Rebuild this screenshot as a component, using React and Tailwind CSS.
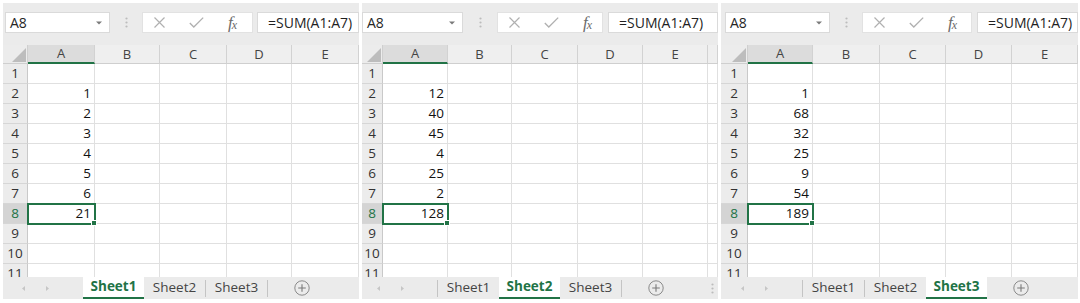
import React from 'react';

const panels = [
  {
    wrap: 'w-[356px]',
    nameBox: 'ml-[2px] w-[105px]',
    dotsArea: 'w-[32px]',
    btnBox: 'w-[111px]',
    formulaGap: 'ml-[4px]',
    rowHdr: 'w-[25px]',
    cols: ['w-[67px]', 'w-[65px]', 'w-[67px]', 'w-[65px]', 'flex-1'],
    letters: ['A', 'B', 'C', 'D', 'E'],
    arrows: 'w-[80px] pl-[19px]',
    active: 0,
    values: ['', '1', '2', '3', '4', '5', '6', '21'],
    scrollDots: false,
  },
  {
    wrap: 'w-[356px]',
    nameBox: 'ml-0 w-[101px]',
    dotsArea: 'w-[34px]',
    btnBox: 'w-[106px]',
    formulaGap: 'ml-[5px]',
    rowHdr: 'w-[21px]',
    cols: ['w-[65px]', 'w-[64px]', 'w-[66px]', 'w-[65px]', 'w-[65px]', 'flex-1'],
    letters: ['A', 'B', 'C', 'D', 'E', ''],
    arrows: 'w-[75px] pl-[15px]',
    active: 1,
    values: ['', '12', '40', '45', '4', '25', '2', '128'],
    scrollDots: true,
  },
  {
    wrap: 'w-[357px]',
    nameBox: 'ml-[4px] w-[105px]',
    dotsArea: 'w-[32px]',
    btnBox: 'w-[110px]',
    formulaGap: 'ml-[5px]',
    rowHdr: 'w-[27px]',
    cols: ['w-[65px]', 'w-[67px]', 'w-[66px]', 'w-[66px]', 'flex-1'],
    letters: ['A', 'B', 'C', 'D', 'E'],
    arrows: 'w-[81px] pl-[20px]',
    active: 2,
    values: ['', '1', '68', '32', '25', '9', '54', '189'],
    scrollDots: false,
  },
];

function VDots() {
  return (
    <svg width="3" height="11" viewBox="0 0 3 11">
      <circle cx="1.5" cy="1.5" r="1.1" fill="#bcbcbc" />
      <circle cx="1.5" cy="5.5" r="1.1" fill="#bcbcbc" />
      <circle cx="1.5" cy="9.5" r="1.1" fill="#bcbcbc" />
    </svg>
  );
}

function Toolbar({ p }) {
  return (
    <div className="h-[42px] shrink-0 flex items-start pt-[9px] font-['Open_Sans',sans-serif]">
      <div className={`${p.nameBox} h-[21px] bg-white border border-[#dadada] flex items-center justify-between pl-[4px] pr-[7px]`}>
        <span className="text-[14px] text-[#262626] leading-none">A8</span>
        <svg width="6" height="4" viewBox="0 0 6 4">
          <path d="M0 0.5H6L3 3.5Z" fill="#7a7a7a" />
        </svg>
      </div>
      <div className={`${p.dotsArea} h-[21px] flex items-center justify-center`}>
        <VDots />
      </div>
      <div className={`${p.btnBox} h-[21px] bg-white border border-[#e2e2e2] flex items-center pl-[11px] gap-[24px]`}>
        <svg width="11" height="11" viewBox="0 0 11 11">
          <path d="M0.5 0.5L10.5 10.5M10.5 0.5L0.5 10.5" stroke="#b0b0b0" strokeWidth="1.2" fill="none" />
        </svg>
        <svg width="15" height="11" viewBox="0 0 15 11">
          <path d="M0.8 6L4.8 10L14.2 0.6" stroke="#b0b0b0" strokeWidth="1.3" fill="none" />
        </svg>
        <span className="font-['Liberation_Serif',serif] italic text-[#6b6b6b] leading-none flex items-end">
          <span className="text-[17px]">f</span>
          <span className="text-[12px] -ml-[1px]">x</span>
        </span>
      </div>
      <div className={`${p.formulaGap} flex-1 h-[21px] bg-white border border-[#dadada] flex items-center pl-[10px] overflow-hidden`}>
        <span className="text-[14px] text-[#1f1f1f] leading-none whitespace-nowrap">=SUM(A1:A7)</span>
      </div>
    </div>
  );
}

function HeaderRow({ p }) {
  return (
    <div className="h-[19px] shrink-0 flex font-['Open_Sans',sans-serif]">
      <div className={`${p.rowHdr} shrink-0 bg-[#ececec] border-r border-b border-[#cfcfcf] flex items-end justify-end pr-[1px] pb-[1px]`}>
        <svg width="14" height="14" viewBox="0 0 14 14">
          <polygon points="14,0 14,14 0,14" fill="#bdbdbd" />
        </svg>
      </div>
      {p.cols.map((c, i) => {
        const sel = i === 0;
        return (
          <div
            key={i}
            className={`${c} ${c === 'flex-1' ? 'min-w-0' : 'shrink-0'} ${
              sel ? 'bg-[#dcdcdc] border-b-2 border-b-[#217346]' : 'bg-[#efefef] border-b border-b-[#cfcfcf]'
            } border-r border-r-[#d2d2d2] flex items-center justify-center text-[13px] text-[#444] leading-none`}
          >
            {p.letters[i]}
          </div>
        );
      })}
    </div>
  );
}

function Row({ p, n, value }) {
  const sel = n === 8;
  return (
    <div className="h-[20px] shrink-0 flex font-['Open_Sans',sans-serif]">
      <div
        className={`${p.rowHdr} shrink-0 border-r border-b border-r-[#c9c9c9] border-b-[#d6d6d6] flex items-center justify-center text-[13.5px] leading-none ${
          sel ? 'bg-[#d4d4d4] text-[#217346]' : 'bg-[#ececec] text-[#333]'
        }`}
      >
        {n}
      </div>
      {p.cols.map((c, i) => {
        const isSel = sel && i === 0;
        return (
          <div
            key={i}
            className={`${c} ${c === 'flex-1' ? 'min-w-0' : 'shrink-0'} bg-white border-r border-b border-[#e0e0e0] flex items-center justify-end pr-[3px] text-[13.5px] text-[#111] leading-none ${
              isSel ? 'relative z-10 outline-2 outline-[#217346] -outline-offset-1' : ''
            }`}
          >
            {i === 0 ? value : ''}
            {isSel && (
              <div className="absolute -right-[3px] -bottom-[3px] w-[6px] h-[6px] bg-[#217346] border border-white" />
            )}
          </div>
        );
      })}
    </div>
  );
}

function Tabs({ p }) {
  const names = ['Sheet1', 'Sheet2', 'Sheet3'];
  const items = [];
  names.forEach((nm, i) => {
    const act = i === p.active;
    const prevAct = i - 1 === p.active;
    if (!act && !prevAct) {
      items.push(<div key={'s' + i} className="w-px h-[17px] self-center bg-[#c4c4c4]" />);
    }
    items.push(
      <div
        key={nm}
        className={`w-[61px] flex items-center justify-center text-[13.5px] leading-none ${
          act ? 'bg-white border-b-2 border-[#217346] text-[#217346] font-bold' : 'text-[#444]'
        }`}
      >
        {nm}
      </div>
    );
  });
  if (p.active !== 2) {
    items.push(<div key="send" className="w-px h-[17px] self-center bg-[#c4c4c4]" />);
  }
  return (
    <div className="h-[22px] shrink-0 flex items-stretch bg-[#ebebeb] font-['Open_Sans',sans-serif]">
      <div className={`${p.arrows} shrink-0 flex items-center gap-[21px]`}>
        <svg width="3" height="5" viewBox="0 0 3 5">
          <path d="M3 0V5L0 2.5Z" fill="#c6c6c6" />
        </svg>
        <svg width="3" height="5" viewBox="0 0 3 5">
          <path d="M0 0V5L3 2.5Z" fill="#c6c6c6" />
        </svg>
      </div>
      {items}
      <div className="ml-[26px] self-center flex">
        <svg width="16" height="16" viewBox="0 0 16 16">
          <circle cx="8" cy="8" r="7.2" stroke="#8a8a8a" strokeWidth="1" fill="none" />
          <path d="M8 4.2V11.8M4.2 8H11.8" stroke="#7a7a7a" strokeWidth="1.1" />
        </svg>
      </div>
      {p.scrollDots && (
        <>
          <div className="flex-1" />
          <div className="self-center mr-[4px] flex">
            <VDots />
          </div>
        </>
      )}
    </div>
  );
}

function Panel({ p }) {
  return (
    <div className={`${p.wrap} h-[296px] shrink-0 flex flex-col bg-[#ebebeb] overflow-hidden`}>
      <Toolbar p={p} />
      <HeaderRow p={p} />
      {[1, 2, 3, 4, 5, 6, 7, 8, 9, 10].map((n) => (
        <Row key={n} p={p} n={n} value={p.values[n - 1] || ''} />
      ))}
      <div className="h-[13px] shrink-0 overflow-hidden">
        <Row p={p} n={11} value="" />
      </div>
      <Tabs p={p} />
    </div>
  );
}

export default function App() {
  return (
    <div className="w-[1080px] h-[303px] bg-white flex items-start gap-[3px] pl-[3px] pt-[3px] overflow-hidden">
      {panels.map((p, i) => (
        <Panel key={i} p={p} />
      ))}
    </div>
  );
}
